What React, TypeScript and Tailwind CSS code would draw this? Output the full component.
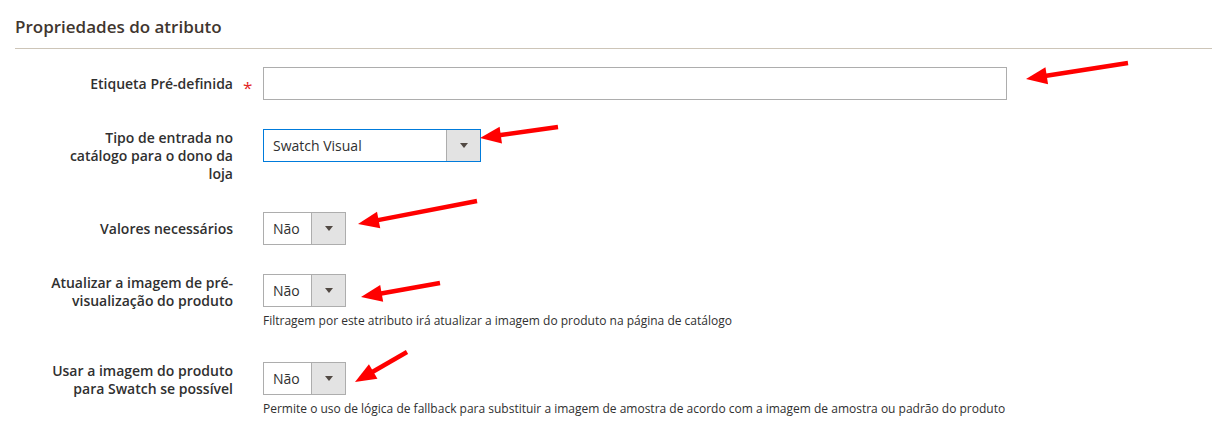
import type { ReactNode } from "react";

type Arrow = { x1: number; y1: number; x2: number; y2: number };

const arrows: Arrow[] = [
  { x1: 1128, y1: 63, x2: 1026, y2: 79 },
  { x1: 558, y1: 127, x2: 480, y2: 138 },
  { x1: 477, y1: 201, x2: 358, y2: 224 },
  { x1: 440, y1: 283, x2: 361, y2: 297 },
  { x1: 407, y1: 352, x2: 355, y2: 382 },
];

function ArrowShape({ x1, y1, x2, y2 }: Arrow) {
  const dx = x2 - x1;
  const dy = y2 - y1;
  const len = Math.hypot(dx, dy);
  const ux = dx / len;
  const uy = dy / len;
  const headLen = 21;
  const half = 8.5;
  const bx = x2 - ux * headLen;
  const by = y2 - uy * headLen;
  const p1 = `${x2},${y2}`;
  const p2 = `${bx - uy * half},${by + ux * half}`;
  const p3 = `${bx + uy * half},${by - ux * half}`;
  return (
    <g>
      <line
        x1={x1}
        y1={y1}
        x2={bx + ux * 2}
        y2={by + uy * 2}
        stroke="#ff0000"
        strokeWidth={4.5}
      />
      <polygon points={`${p1} ${p2} ${p3}`} fill="#ff0000" />
    </g>
  );
}

function SelectBox({
  value,
  width,
  focused,
}: {
  value: string;
  width: string;
  focused?: boolean;
}) {
  return (
    <div
      className={`flex h-[33px] ${width} border ${
        focused ? "border-[#007bdb]" : "border-[#adadad]"
      } bg-white`}>
      <div className="flex flex-1 items-center pl-[9px] text-[14px] text-[#303030]">
        {value}
      </div>
      <div className="flex w-[34px] items-center justify-center border-l border-[#adadad] bg-[#e3e3e3]">
        <svg width="8" height="5" viewBox="0 0 8 5">
          <polygon points="0,0 8,0 4,5" fill="#514943" />
        </svg>
      </div>
    </div>
  );
}

function Row({
  label,
  multiline,
  required,
  note,
  className,
  children,
}: {
  label: ReactNode;
  multiline?: boolean;
  required?: boolean;
  note?: string;
  className: string;
  children: ReactNode;
}) {
  return (
    <div className={`flex ${className}`}>
      <div
        className={`w-[218px] shrink-0 text-right text-[14px] font-semibold text-[#303030] ${
          multiline ? "leading-[18px]" : "pt-[8px] leading-[18px]"
        }`}>
        {label}
      </div>
      <div className="w-[30px] shrink-0 pl-[10px]">
        {required && (
          <div className="pt-[12px] text-[17px] leading-none text-[#e22626]">
            *
          </div>
        )}
      </div>
      <div className="flex flex-col">
        {children}
        {note && (
          <div className="mt-[5px] text-[12px] leading-[18px] text-[#303030]">
            {note}
          </div>
        )}
      </div>
    </div>
  );
}

export default function App() {
  return (
    <div className="relative h-[447px] w-full overflow-hidden bg-white font-['Open_Sans',sans-serif]">
      <div className="pl-[15px]">
        <div className="border-b border-[#cdc5b8] pt-[14px] pb-[8px] text-[17px] leading-[26px] font-semibold text-[#41362f]">
          Propriedades do atributo
        </div>
      </div>

      <div className="px-[15px] pt-[18px]">
        <Row label="Etiqueta Pré-definida" required className="mb-[29px]">
          <div className="h-[33px] w-[744px] border border-[#adadad] bg-white" />
        </Row>

        <Row
          multiline
          className="mb-[29px]"
          label={
            <>
              Tipo de entrada no
              <br />
              catálogo para o dono da
              <br />
              loja
            </>
          }>
          <SelectBox value="Swatch Visual" width="w-[218px]" focused />
        </Row>

        <Row label="Valores necessários" className="mb-[29px]">
          <SelectBox value="Não" width="w-[83px]" />
        </Row>

        <Row
          multiline
          className="mb-[32px]"
          note="Filtragem por este atributo irá atualizar a imagem do produto na página de catálogo"
          label={
            <>
              Atualizar a imagem de pré-
              <br />
              visualização do produto
            </>
          }>
          <SelectBox value="Não" width="w-[83px]" />
        </Row>

        <Row
          multiline
          className="mb-[20px]"
          note="Permite o uso de lógica de fallback para substituir a imagem de amostra de acordo com a imagem de amostra ou padrão do produto"
          label={
            <>
              Usar a imagem do produto
              <br />
              para Swatch se possível
            </>
          }>
          <SelectBox value="Não" width="w-[83px]" />
        </Row>
      </div>

      <svg
        className="pointer-events-none absolute top-0 left-0"
        width="1212"
        height="447">
        {arrows.map((a, i) => (
          <ArrowShape key={i} {...a} />
        ))}
      </svg>
    </div>
  );
}
